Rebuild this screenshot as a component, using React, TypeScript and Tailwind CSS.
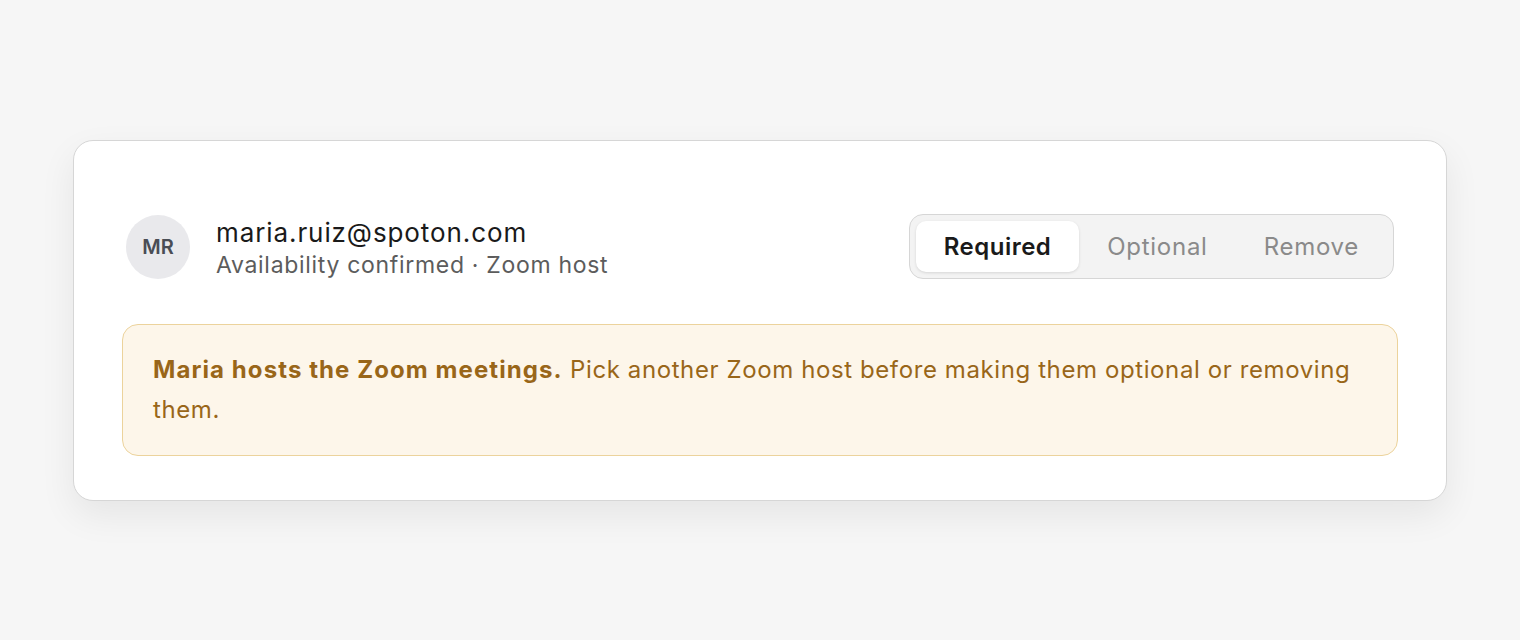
import { useState } from "react";

const options = ["Required", "Optional", "Remove"];

const AttendeeCard = () => {
  const [mode, setMode] = useState("Required");

  return (
    <div className="w-full min-h-screen bg-[#f6f6f6] flex items-center justify-center px-[73px] font-['Inter','Liberation_Sans',sans-serif]">
      <div className="w-full bg-white border border-[#d6d6d6] rounded-[20px] shadow-[0_14px_36px_rgba(0,0,0,0.07)] px-12 pt-12 pb-11">
        <div className="flex items-center justify-between px-1 py-6">
          <div className="flex items-center gap-[26px]">
            <div className="w-16 h-16 rounded-full bg-[#e9e9ec] flex items-center justify-center text-[20px] font-semibold text-[#4a4d55]">
              MR
            </div>
            <div className="flex flex-col pt-1">
              <span className="text-[26px] leading-[32px] tracking-[0.035em] text-[#1a1a1a]">
                maria.ruiz@spoton.com
              </span>
              <span className="text-[23px] leading-[32px] tracking-[0.03em] text-[#5c5c5c]">
                Availability confirmed · Zoom host
              </span>
            </div>
          </div>
          <div className="flex items-center p-1.5 bg-[#f3f3f3] border border-[#d6d6d6] rounded-[14px]">
            {options.map((item) => (
              <button
                key={item}
                type="button"
                onClick={() => setMode(item)}
                className={
                  mode === item
                    ? "px-7 h-[51px] rounded-[10px] bg-white shadow-[0_1px_3px_rgba(0,0,0,0.12)] text-[24px] tracking-[0.02em] font-semibold text-[#1a1a1a]"
                    : "px-7 h-[51px] rounded-[10px] text-[24px] tracking-[0.03em] font-normal text-[#8a8a8a]"
                }
              >
                {item}
              </button>
            ))}
          </div>
        </div>
        <div className="mt-[19px] bg-[#fdf6ea] border border-[#ecd39c] rounded-2xl px-[30px] pt-[25px] pb-[25px] text-[24px] leading-[40px] tracking-[0.025em] text-[#996619]">
          <span className="font-bold tracking-[0.045em]">Maria hosts the Zoom meetings.</span>{" "}
          Pick another Zoom host before making them optional or removing them.
        </div>
      </div>
    </div>
  );
};

export default AttendeeCard;
